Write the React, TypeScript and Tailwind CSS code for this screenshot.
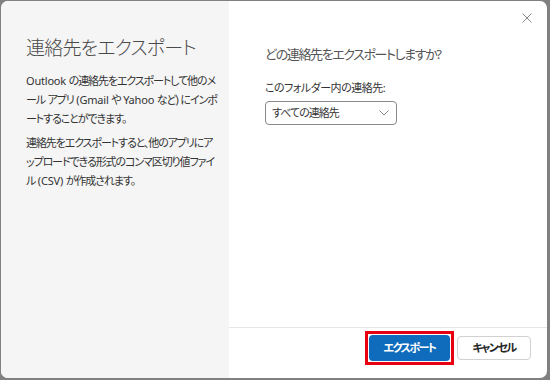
import React from "react";

const font = {
  fontFamily: '"Noto Sans", "Noto Sans CJK JP", sans-serif',
};

function L({ children }: { children: React.ReactNode }) {
  return <span className="tracking-[-0.2px]">{children}</span>;
}

export default function App() {
  return (
    <div
      className="w-[550px] h-[380px] bg-[#808080] pl-[1px] pt-[1px] pr-[3px] pb-[2px] [font-feature-settings:'palt']"
      style={font}
    >
      <div className="flex h-full w-full overflow-hidden rounded-[7px] bg-white">
        <div className="w-[228px] shrink-0 whitespace-pre bg-[#f5f5f5] pl-[25px] pt-[33px]">
          <h1 className="text-[19px] leading-[28px] font-light tracking-[-0.8px] text-[#4a4a4a]">
            連絡先をエクスポート
          </h1>
          <p className="mt-[9px] text-[11px] leading-[19px] tracking-[-1.1px] text-[#333333]">
            <L>Outlook </L>の連絡先をエクスポートして他のメ
            <br />
            ール<L> </L>アプリ<L> (Gmail </L>や<L> Yahoo </L>など)<L> </L>にインポ
            <br />
            ートすることができます。
          </p>
          <p className="mt-[5px] text-[11px] leading-[19px] tracking-[-1.1px] text-[#333333]">
            連絡先をエクスポートすると、他のアプリにア
            <br />
            ップロードできる形式のコンマ区切り値ファイ
            <br />
            ル<L> (CSV) </L>が作成されます。
          </p>
        </div>
        <div className="relative flex flex-1 flex-col whitespace-nowrap">
          <button className="absolute right-[15px] top-[12px] flex h-[10px] w-[10px] items-center justify-center">
            <svg width="10" height="10" viewBox="0 0 10 10">
              <path d="M0.5 0.5 L9.5 9.5 M9.5 0.5 L0.5 9.5" stroke="#8a8a8a" strokeWidth="1" fill="none" />
            </svg>
          </button>
          <div className="flex-1 pl-[36px] pt-[43px]">
            <div className="text-[13px] leading-[20px] tracking-[-1.4px] text-[#555555]">
              どの連絡先をエクスポートしますか?
            </div>
            <div className="mt-[15px] text-[11px] leading-[18px] tracking-[-0.5px] text-[#333333]">
              このフォルダー内の連絡先:
            </div>
            <div className="mt-[4px] flex h-[24px] w-[132px] items-center justify-between rounded-[4px] border border-[#8a8a8a] pl-[6px] pr-[7px]">
              <span className="text-[11px] leading-[16px] tracking-[-1px] text-[#333333]">すべての連絡先</span>
              <svg width="10" height="6" viewBox="0 0 10 6">
                <path d="M0.5 0.5 L5 5 L9.5 0.5" stroke="#8a8a8a" strokeWidth="1" fill="none" />
              </svg>
            </div>
          </div>
          <div className="flex h-[51px] items-start justify-end border-t border-[#e6e6e6] pr-[16px] pt-[3px]">
            <div className="border-[3px] border-[#e60012] p-px">
              <button className="flex h-[26px] w-[81px] items-center justify-center rounded-[4px] bg-[#0f6cbd] text-[11px] font-bold tracking-[-1.5px] text-white">
                エクスポート
              </button>
            </div>
            <button className="ml-[3px] mt-[5px] flex h-[24px] w-[74px] items-center justify-center rounded-[4px] border border-[#d1d1d1] bg-white text-[11px] font-bold tracking-[-1.5px] text-[#242424]">
              キャンセル
            </button>
          </div>
        </div>
      </div>
    </div>
  );
}
